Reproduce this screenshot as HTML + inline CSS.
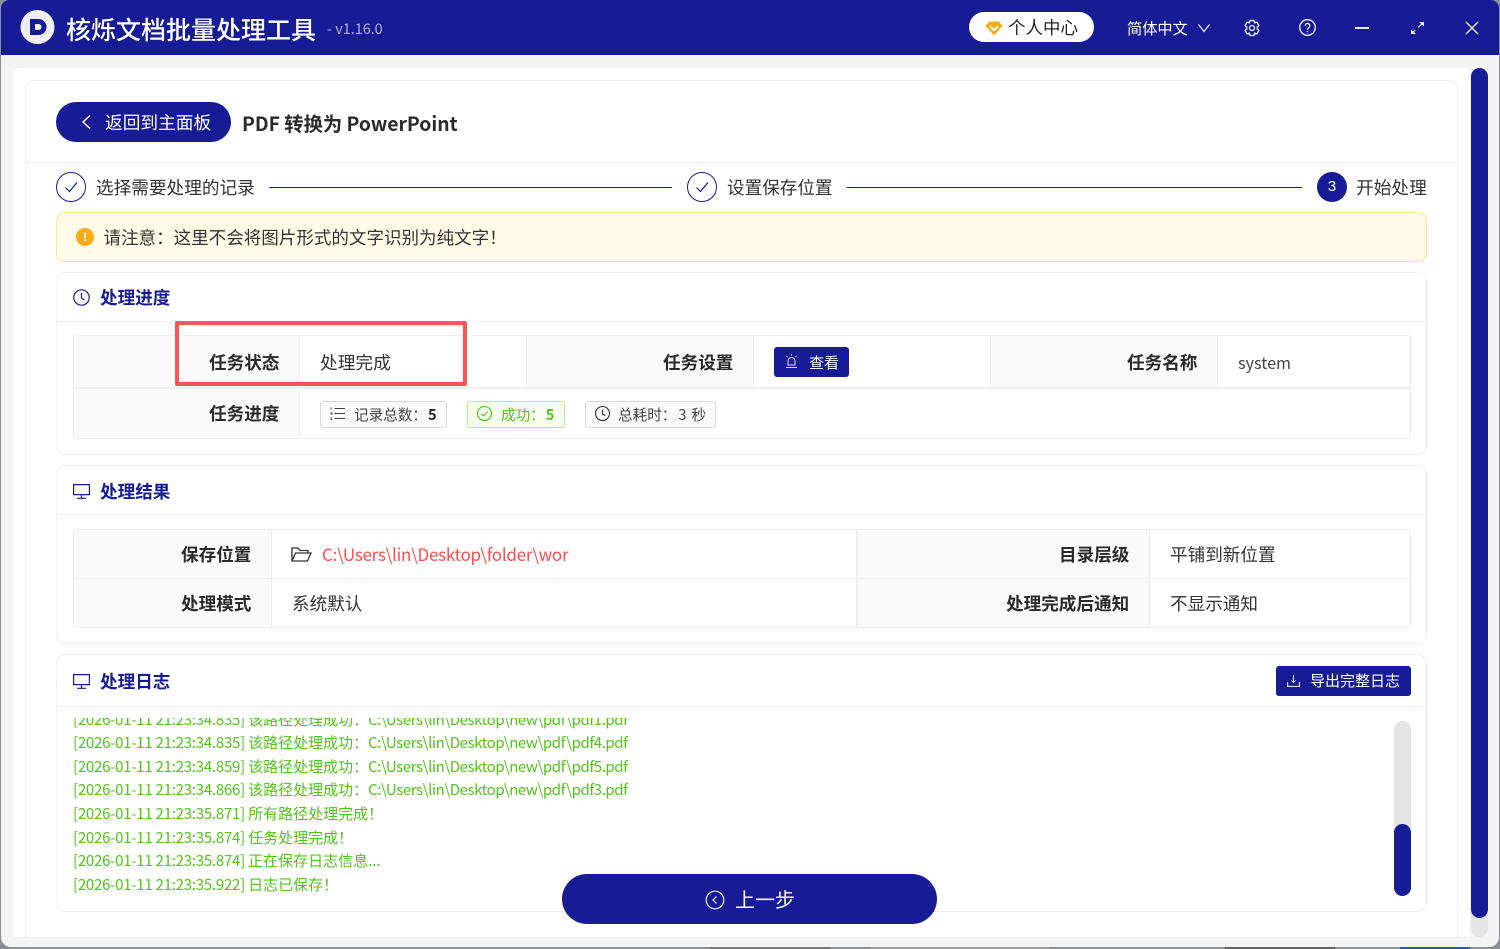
<!DOCTYPE html>
<html lang="zh"><head><meta charset="utf-8"><title>核烁文档批量处理工具</title>
<style>
html,body{margin:0;padding:0;width:1500px;height:949px;overflow:hidden;background:#8a8f98}
*{box-sizing:border-box}
body{font-family:"Liberation Sans","Noto Sans CJK SC",sans-serif;color:#2a2a2a;position:relative}
.a{position:absolute}
.t{position:absolute;white-space:nowrap;font-family:"Noto Sans CJK SC","Liberation Sans",sans-serif}
.b{font-weight:700}
.win{position:absolute;left:1px;top:0;width:1498px;height:947px;background:#f4f4f4;border-radius:8px 8px 10px 10px;overflow:hidden}
.card{position:absolute;left:56px;width:1371px;background:#fff;border:1px solid #eeeeee;border-radius:10px}
.lab{position:absolute;background:#fafafa}
.ln{position:absolute;background:#eeeeee}
.h{font-size:17.600px;font-weight:700;color:#171c96;line-height:24px}
.log{position:absolute;left:73px;font-size:15px;line-height:20px;color:#52c41a;white-space:nowrap;font-family:"Noto Sans CJK SC","Liberation Sans",sans-serif}
.d{letter-spacing:-.24px}
.p{letter-spacing:-.43px}
.tag{position:absolute;top:401px;height:27px;border:1px solid #d9d9d9;background:#fafafa;border-radius:3px}
svg{position:absolute;overflow:visible}
</style></head><body>
<div class="a" style="left:710px;top:946px;width:120px;height:3px;background:#777"></div>
<div class="a" style="left:870px;top:946px;width:180px;height:3px;background:#999"></div>
<div class="a" style="left:1225px;top:946px;width:110px;height:3px;background:#666"></div>
<div class="a" style="left:1400px;top:946px;width:70px;height:3px;background:#2a5caa"></div>
<div class="win"></div>
<div class="a" style="left:1px;top:0;width:1498px;height:55px;background:#171c96;border-radius:8px 8px 0 0"></div>

<!-- logo -->
<svg style="left:20px;top:9px" width="36" height="36" viewBox="0 0 36 36"><circle cx="17.500" cy="18" r="17" fill="#efeff2"/><path d="M10 10h8.500a8 8 0 0 1 0 16H10z" fill="#171c96"/><path d="M15 15h3.500a3 3 0 0 1 0 6H15z" fill="#efeff2"/></svg>
<div class="t" style="left:66px;top:11px;font-size:25px;line-height:36px;color:#fff;font-weight:500">核烁文档批量处理工具</div>
<div class="t" style="left:327px;top:19px;font-size:14.400px;line-height:20px;color:#aeb0dc">- v1.16.0</div>

<!-- header right -->
<div class="a" style="left:969px;top:12px;width:125px;height:30px;background:#fff;border-radius:15px"></div>
<svg style="left:985px;top:21px" width="18" height="15" viewBox="0 0 18 15"><path d="M4 .5h10l3.500 4.500L9 14.500.5 5z" fill="#faad14"/><path d="M5 5.500l4 3.500 4-3.500" fill="none" stroke="#fff" stroke-width="2"/></svg>
<div class="t" style="left:1008px;top:15px;font-size:17.500px;line-height:25px;color:#222">个人中心</div>
<div class="t" style="left:1127px;top:18px;font-size:15.200px;line-height:21px;color:#fff">简体中文</div>
<svg style="left:1197px;top:23px" width="14" height="10" viewBox="0 0 14 10"><path d="M1.500 1.500L7 8.500l5.500-7" fill="none" stroke="#e8e8f6" stroke-width="1.300"/></svg>
<svg style="left:1243px;top:19px" width="18" height="18" viewBox="0 0 18 18" fill="none" stroke="#f0f0fa" stroke-width="1.300"><path d="M7 1.500h4l.6 2.300 2.300-.7 2 3.400-1.700 1.700v1.600l1.700 1.700-2 3.400-2.300-.7-.6 2.300H7l-.6-2.300-2.300.7-2-3.400 1.700-1.700V8.200L2.100 6.500l2-3.400 2.300.7z"/><circle cx="9" cy="9" r="2.500"/></svg>
<svg style="left:1299px;top:19px" width="17" height="17" viewBox="0 0 17 17" fill="none" stroke="#f0f0fa" stroke-width="1.300"><circle cx="8.500" cy="8.500" r="7.800"/><path d="M6.200 6.700a2.300 2.300 0 1 1 3.600 1.900c-.9.600-1.300 1-1.300 2"/><path d="M8.500 12v1.300"/></svg>
<div class="a" style="left:1355px;top:27px;width:14px;height:2px;background:#e8e8f6"></div>
<svg style="left:1410px;top:21px" width="15" height="14" viewBox="0 0 15 14"><path d="M2 12L13 2" stroke="#f0f0fa" stroke-width="1.200" stroke-dasharray="4.500 4 6"/><path d="M9 1h5v4.500zM1 8.500V13h5z" fill="#f0f0fa"/></svg>
<svg style="left:1465px;top:21px" width="14" height="14" viewBox="0 0 14 14"><path d="M1 1l12 12M13 1L1 13" stroke="#f0f0fa" stroke-width="1.400"/></svg>

<!-- main panel -->
<div class="a" style="left:13px;top:68px;width:1457px;height:869px;background:#fff;border-radius:6px 6px 0 0"></div>
<div class="a" style="left:25px;top:80px;width:1433px;height:870px;border:1px solid #eeeeee;border-radius:10px;background:#fff;clip-path:inset(0 0 13px 0)"></div>
<div class="a" style="left:26px;top:162px;width:1431px;height:1px;background:#eeeeee"></div>
<!-- page scroll -->
<div class="a" style="left:1471px;top:68px;width:17px;height:869px;background:#e5e5e5;border-radius:9px"></div>
<div class="a" style="left:1471px;top:68px;width:17px;height:850px;background:#171c96;border-radius:9px"></div>

<!-- title row -->
<div class="a" style="left:56px;top:102px;width:175px;height:40px;background:#171c96;border-radius:20px"></div>
<svg style="left:80px;top:114px" width="12" height="16" viewBox="0 0 12 16"><path d="M10 1.500L3 8l7 6.500" fill="none" stroke="#fff" stroke-width="1.500"/></svg>
<div class="t" style="left:105px;top:109px;font-size:17.700px;line-height:26px;color:#fff">返回到主面板</div>
<div class="t b" style="left:242px;top:109px;font-size:19.300px;line-height:28px;color:#2a2a2a">PDF 转换为 PowerPoint</div>

<!-- steps -->
<svg style="left:56px;top:172px" width="30" height="30" viewBox="0 0 30 30" fill="none" stroke="#171c96"><circle cx="15" cy="15" r="14.500" stroke-width="1"/><path d="M9.500 15.500l4 4 7.500-9" stroke-width="1.200"/></svg>
<div class="t" style="left:96px;top:175px;font-size:17.650px;line-height:25px;color:#333">选择需要处理的记录</div>
<div class="a" style="left:269px;top:187px;width:403px;height:1px;background:#171c96"></div>
<svg style="left:687px;top:172px" width="30" height="30" viewBox="0 0 30 30" fill="none" stroke="#171c96"><circle cx="15" cy="15" r="14.500" stroke-width="1"/><path d="M9.500 15.500l4 4 7.500-9" stroke-width="1.200"/></svg>
<div class="t" style="left:727px;top:175px;font-size:17.600px;line-height:25px;color:#333">设置保存位置</div>
<div class="a" style="left:847px;top:187px;width:455px;height:1px;background:#171c96"></div>
<div class="a" style="left:1317px;top:172px;width:30px;height:30px;border-radius:50%;background:#171c96;color:#fff;font-size:15px;line-height:30px;text-align:center">3</div>
<div class="t" style="left:1356px;top:175px;font-size:17.700px;line-height:25px;color:#333">开始处理</div>

<!-- alert -->
<div class="a" style="left:56px;top:212px;width:1371px;height:50px;background:#fffbe6;border:1px solid #ffe58f;border-radius:9px"></div>
<div class="a" style="left:76px;top:228px;width:18px;height:18px;border-radius:50%;background:#faad14;color:#fff;font-size:12px;font-weight:700;line-height:18px;text-align:center">!</div>
<div class="t" style="left:103.500px;top:225px;font-size:17.550px;line-height:25px;color:#333">请注意：这里不会将图片形式的文字识别为纯文字！</div>

<!-- card 1 -->
<div class="card" style="top:272px;height:183px"></div>
<div class="a" style="left:57px;top:321px;width:1369px;height:1px;background:#eeeeee"></div>
<svg style="left:73px;top:289px" width="17" height="17" viewBox="0 0 17 17" fill="none" stroke="#171c96" stroke-width="1.200"><circle cx="8.500" cy="8.500" r="7.700"/><path d="M8.500 4v5l3 2"/></svg>
<div class="t h" style="left:100px;top:286px">处理进度</div>

<div class="a" style="left:73px;top:335px;width:1338px;height:104px;border:1px solid #eeeeee;border-radius:3px"></div>
<div class="lab" style="left:74px;top:336px;width:225px;height:51px"></div>
<div class="lab" style="left:527px;top:336px;width:226px;height:51px"></div>
<div class="lab" style="left:991px;top:336px;width:226px;height:51px"></div>
<div class="lab" style="left:74px;top:389px;width:225px;height:49px"></div>
<div class="ln" style="left:74px;top:387px;width:1336px;height:2px"></div>
<div class="ln" style="left:299px;top:336px;width:1px;height:102px"></div>
<div class="ln" style="left:526px;top:336px;width:1px;height:51px"></div>
<div class="ln" style="left:753px;top:336px;width:1px;height:51px"></div>
<div class="ln" style="left:990px;top:336px;width:1px;height:51px"></div>
<div class="ln" style="left:1217px;top:336px;width:1px;height:51px"></div>

<div class="t b" style="left:209px;top:351px;font-size:17.600px;line-height:24px;color:#2a2a2a">任务状态</div>
<div class="t" style="left:320px;top:350px;font-size:17.700px;line-height:24px;color:#333">处理完成</div>
<div class="t b" style="left:663px;top:351px;font-size:17.600px;line-height:24px;color:#2a2a2a">任务设置</div>
<div class="a" style="left:774px;top:347px;width:75px;height:30px;background:#171c96;border-radius:3px"></div>
<svg style="left:785px;top:354px" width="13" height="15" viewBox="0 0 13 15" fill="none" stroke="#d8d8f2" stroke-width="1"><path d="M3 11V7a3.500 3.500 0 0 1 7 0v4zM1 13.500h11M6.500 0v1.500M1.500 2l1 1M11.500 2l-1 1"/></svg>
<div class="t" style="left:809px;top:352px;font-size:15px;line-height:21px;color:#fff">查看</div>
<div class="t b" style="left:1127px;top:351px;font-size:17.600px;line-height:24px;color:#2a2a2a">任务名称</div>
<div class="t" style="left:1238px;top:351px;font-size:16.200px;line-height:23px;color:#444">system</div>
<div class="t b" style="left:209px;top:402px;font-size:17.600px;line-height:24px;color:#2a2a2a">任务进度</div>

<div class="tag" style="left:320px;width:127px"></div>
<svg style="left:330px;top:407px" width="15" height="13" viewBox="0 0 15 13" stroke="#444" stroke-width="1" fill="none"><path d="M4.500 1.500H15M4.500 6.500H15M4.500 11.500H15M1 .5v2M.5 6h1.500v1H.5M.5 11h1.500M.5 12.500h1.500"/></svg>
<div class="t" style="left:354px;top:404px;font-size:14.600px;line-height:21px;color:#444">记录总数：<span style="font-weight:700;color:#222;margin-left:1px">5</span></div>

<div class="tag" style="left:467px;width:98px;border-color:#b7eb8f;background:#f6ffed"></div>
<svg style="left:477px;top:406px" width="15" height="15" viewBox="0 0 15 15" fill="none" stroke="#52c41a" stroke-width="1.100"><circle cx="7.500" cy="7.500" r="7"/><path d="M4.500 7.800l2.200 2.200 4-4.500"/></svg>
<div class="t" style="left:501px;top:404px;font-size:14.600px;line-height:21px;color:#52c41a">成功：<span style="font-weight:700;margin-left:1px">5</span></div>

<div class="tag" style="left:585px;width:131px"></div>
<svg style="left:595px;top:406px" width="15" height="15" viewBox="0 0 15 15" fill="none" stroke="#333" stroke-width="1.100"><circle cx="7.500" cy="7.500" r="7"/><path d="M7.500 3.500v4.500l2.800 1.600"/></svg>
<div class="t" style="left:618px;top:404px;font-size:14.600px;line-height:21px;color:#444">总耗时：<span style="margin-left:2px">3</span><span style="margin-left:5px">秒</span></div>

<!-- red box -->
<div class="a" style="left:175px;top:321px;width:292px;height:65px;border:4px solid #f55656;border-radius:2px"></div>

<!-- card 2 -->
<div class="card" style="top:465px;height:179px"></div>
<div class="a" style="left:57px;top:514px;width:1369px;height:1px;background:#eeeeee"></div>
<svg style="left:73px;top:484px" width="17" height="15" viewBox="0 0 17 15" fill="none" stroke="#171c96" stroke-width="1.200"><path d="M.6.600h15.800v10H.6zM8.500 10.600v3.400M4 14.300h9"/></svg>
<div class="t h" style="left:100px;top:480px">处理结果</div>

<div class="a" style="left:73px;top:529px;width:1338px;height:99px;border:1px solid #eeeeee;border-radius:3px"></div>
<div class="lab" style="left:74px;top:530px;width:197px;height:97px"></div>
<div class="lab" style="left:858px;top:530px;width:291px;height:97px"></div>
<div class="ln" style="left:74px;top:578px;width:1336px;height:1px"></div>
<div class="ln" style="left:271px;top:530px;width:1px;height:97px"></div>
<div class="ln" style="left:856px;top:530px;width:2px;height:97px"></div>
<div class="ln" style="left:1149px;top:530px;width:1px;height:97px"></div>

<div class="t b" style="left:181px;top:543px;font-size:17.600px;line-height:24px;color:#2a2a2a">保存位置</div>
<svg style="left:291px;top:547px" width="21" height="15" viewBox="0 0 21 15" fill="none" stroke="#333" stroke-width="1.300"><path d="M1 14V1h6l2 2.500h8V6M1 14h15.500L20 6H4.500z"/></svg>
<div class="t" style="left:322px;top:542px;font-size:17px;line-height:24px;letter-spacing:-.26px;color:#ff4d4f">C:\Users\lin\Desktop\folder\wor</div>
<div class="t b" style="left:1059px;top:543px;font-size:17.600px;line-height:24px;color:#2a2a2a">目录层级</div>
<div class="t" style="left:1170px;top:543px;font-size:17.600px;line-height:24px;color:#333">平铺到新位置</div>
<div class="t b" style="left:181px;top:592px;font-size:17.600px;line-height:24px;color:#2a2a2a">处理模式</div>
<div class="t" style="left:292px;top:592px;font-size:17.600px;line-height:24px;color:#333">系统默认</div>
<div class="t b" style="left:1006px;top:592px;font-size:17.600px;line-height:24px;color:#2a2a2a">处理完成后通知</div>
<div class="t" style="left:1170px;top:592px;font-size:17.600px;line-height:24px;color:#333">不显示通知</div>

<!-- card 3 -->
<div class="card" style="top:654px;height:258px"></div>
<div class="a" style="left:57px;top:706px;width:1369px;height:1px;background:#eeeeee"></div>
<svg style="left:73px;top:674px" width="17" height="15" viewBox="0 0 17 15" fill="none" stroke="#171c96" stroke-width="1.200"><path d="M.6.600h15.800v10H.6zM8.500 10.600v3.400M4 14.300h9"/></svg>
<div class="t h" style="left:100px;top:670px">处理日志</div>
<div class="a" style="left:1276px;top:666px;width:135px;height:30px;background:#171c96;border-radius:3px"></div>
<svg style="left:1287px;top:674px" width="13" height="13" viewBox="0 0 13 13" fill="none" stroke="#dfe0f5" stroke-width="1.100"><path d="M.6 8v4.400h11.800V8M6.500 1v7.500M4.500 6.500l2 2 2-2"/></svg>
<div class="t" style="left:1310px;top:670px;font-size:15px;line-height:21px;color:#fff">导出完整日志</div>

<!-- log -->
<div class="a" style="left:57px;top:718px;width:1320px;height:180px;overflow:hidden">
<div class="log" style="left:16px;top:-8px"><span class="d">[2026-01-11 21:23:34.835] </span>该路径处理成功：<span class="p">C:\Users\lin\Desktop\new\pdf\pdf1.pdf</span></div>
</div>
<div class="log" style="top:733px"><span class="d">[2026-01-11 21:23:34.835] </span>该路径处理成功：<span class="p">C:\Users\lin\Desktop\new\pdf\pdf4.pdf</span></div>
<div class="log" style="top:757px"><span class="d">[2026-01-11 21:23:34.859] </span>该路径处理成功：<span class="p">C:\Users\lin\Desktop\new\pdf\pdf5.pdf</span></div>
<div class="log" style="top:780px"><span class="d">[2026-01-11 21:23:34.866] </span>该路径处理成功：<span class="p">C:\Users\lin\Desktop\new\pdf\pdf3.pdf</span></div>
<div class="log" style="top:804px"><span class="d">[2026-01-11 21:23:35.871] </span>所有路径处理完成！</div>
<div class="log" style="top:828px"><span class="d">[2026-01-11 21:23:35.874] </span>任务处理完成！</div>
<div class="log" style="top:851px"><span class="d">[2026-01-11 21:23:35.874] </span>正在保存日志信息...</div>
<div class="log" style="top:875px"><span class="d">[2026-01-11 21:23:35.922] </span>日志已保存！</div>

<div class="a" style="left:1394px;top:721px;width:17px;height:175px;background:#e5e5e5;border-radius:9px"></div>
<div class="a" style="left:1394px;top:824px;width:17px;height:72px;background:#171c96;border-radius:9px"></div>

<!-- prev button -->
<div class="a" style="left:562px;top:874px;width:375px;height:50px;background:#171c96;border-radius:25px"></div>
<svg style="left:705px;top:890px" width="20" height="20" viewBox="0 0 20 20" fill="none" stroke="#f0f0fa" stroke-width="1.200"><circle cx="10" cy="10" r="8.800"/><path d="M11.500 6.500L8 10l3.500 3.500"/></svg>
<div class="t" style="left:735px;top:885px;font-size:20px;line-height:27px;color:#fff">上一步</div>
</body></html>
